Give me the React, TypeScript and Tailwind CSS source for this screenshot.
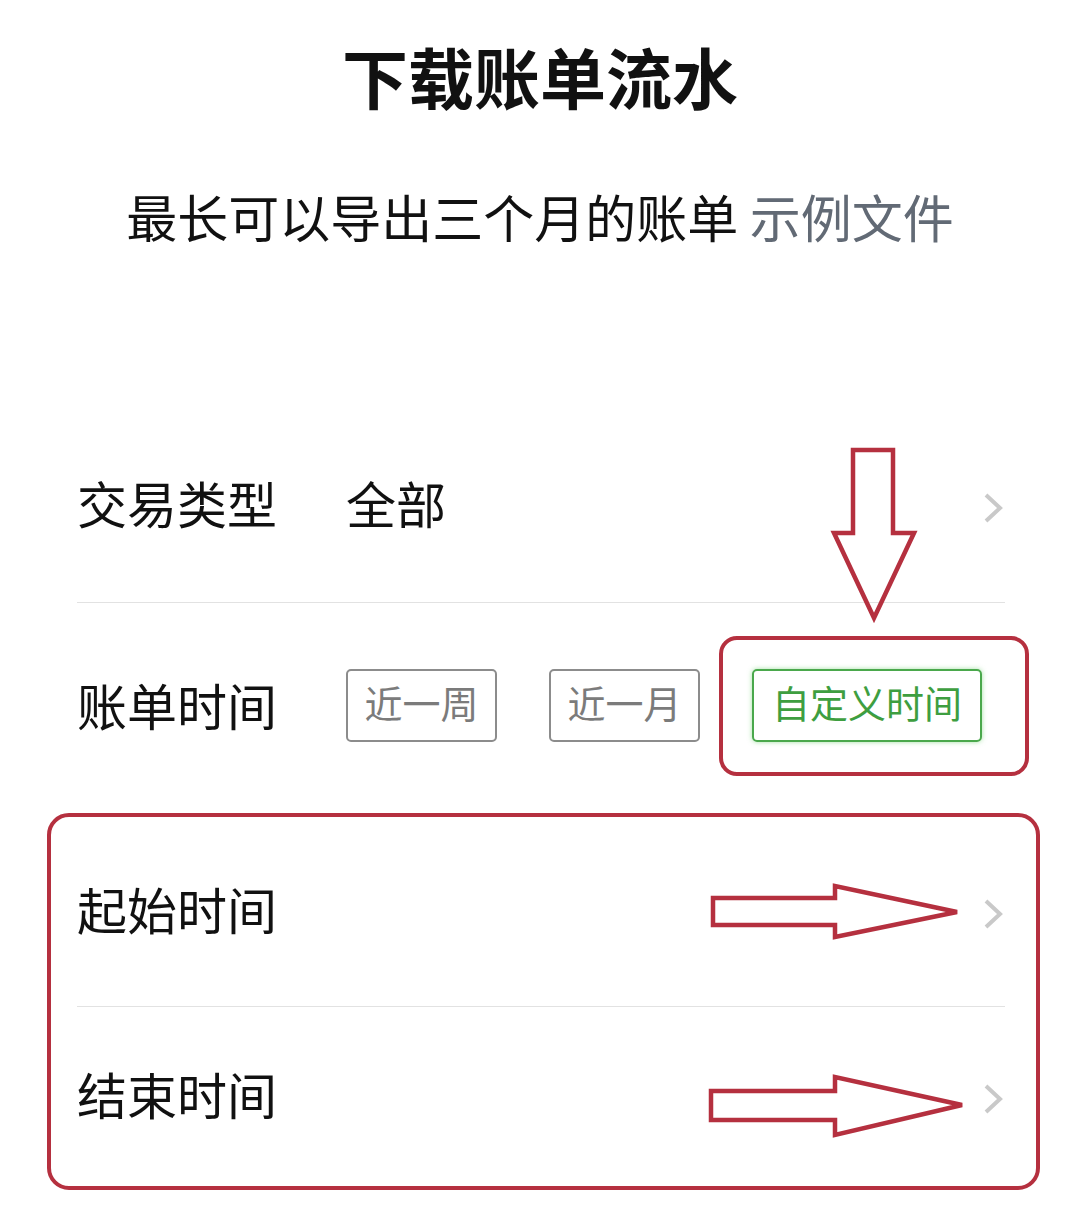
import React from 'react';

const cjk = { fontFamily: '"Noto Sans CJK SC", "Noto Sans", sans-serif' };

function Chevron() {
  return (
    <svg width="20" height="30" viewBox="0 0 20 30" className="mt-[4px] shrink-0">
      <polyline
        points="3,2 17,15 3,28"
        fill="none"
        stroke="#c9c9c9"
        strokeWidth="4"
        strokeLinejoin="miter"
      />
    </svg>
  );
}

function RangeButton({ label, active }: { label: string; active?: boolean }) {
  return (
    <div
      className={`flex h-[73px] items-center justify-center rounded-[5px] border-2 pb-[6px] text-[38px] leading-none ${
        active
          ? 'w-[230px] border-[#4aa84c] text-[#3e9e40] shadow-[0_0_5px_rgba(90,200,90,0.55)]'
          : 'w-[151px] border-[#8c8c8c] text-[#7b7b7b]'
      }`}
    >
      {label}
    </div>
  );
}

export default function App() {
  return (
    <div
      className="relative h-[1215px] w-[1080px] overflow-hidden bg-white text-[#111]"
      style={cjk}
    >
      <div className="flex h-[150px] items-center justify-center">
        <h1 className="text-[66px] font-bold leading-none">下载账单流水</h1>
      </div>

      <div className="flex h-[132px] items-center justify-center">
        <p className="text-[51px] leading-none">
          最长可以导出三个月的账单 <span className="text-[#626a75]">示例文件</span>
        </p>
      </div>

      <div className="mt-[127px]">
        <div className="ml-[77px] mr-[75px] flex h-[194px] items-center border-b border-[#e2e2e2] pr-[2px]">
          <span className="mb-[8px] w-[269px] text-[50px] leading-none">交易类型</span>
          <span className="mb-[8px] flex-1 text-[50px] leading-none">全部</span>
          <Chevron />
        </div>

        <div className="ml-[77px] mr-[75px] flex h-[210px] items-center">
          <span className="mb-[8px] w-[269px] text-[50px] leading-none">账单时间</span>
          <div className="mb-[6px] flex items-center gap-[52px]">
            <RangeButton label="近一周" />
            <RangeButton label="近一月" />
            <div className="relative">
              <RangeButton label="自定义时间" active />
              <span className="pointer-events-none absolute -bottom-[34px] -left-[33px] -right-[47px] -top-[33px] rounded-[18px] border-4 border-[#b5303f]" />
            </div>
          </div>
        </div>

        <div className="ml-[47px] w-[993px] rounded-[22px] border-4 border-[#b5303f]">
          <div className="ml-[26px] mr-[31px] flex h-[190px] items-center border-b border-[#e2e2e2] pr-[2px]">
            <span className="mb-[8px] flex-1 text-[50px] leading-none">起始时间</span>
            <Chevron />
          </div>
          <div className="ml-[26px] mr-[31px] flex h-[179px] items-center pr-[2px]">
            <span className="mb-[8px] flex-1 text-[50px] leading-none">结束时间</span>
            <Chevron />
          </div>
        </div>
      </div>

      <svg
        className="pointer-events-none absolute inset-0"
        width="1080"
        height="1215"
        viewBox="0 0 1080 1215"
      >
        <g fill="none" stroke="#b5303f" strokeWidth="4.5" strokeLinejoin="miter">
          <polygon points="853,450 893,450 893,533 914,533 874,618 834,533 853,533" />
          <polygon points="713,898 835,898 835,886 957,912 835,937 835,925 713,925" />
          <polygon points="711,1091 835,1091 835,1077 962,1105 835,1135 835,1120 711,1120" />
        </g>
      </svg>
    </div>
  );
}
